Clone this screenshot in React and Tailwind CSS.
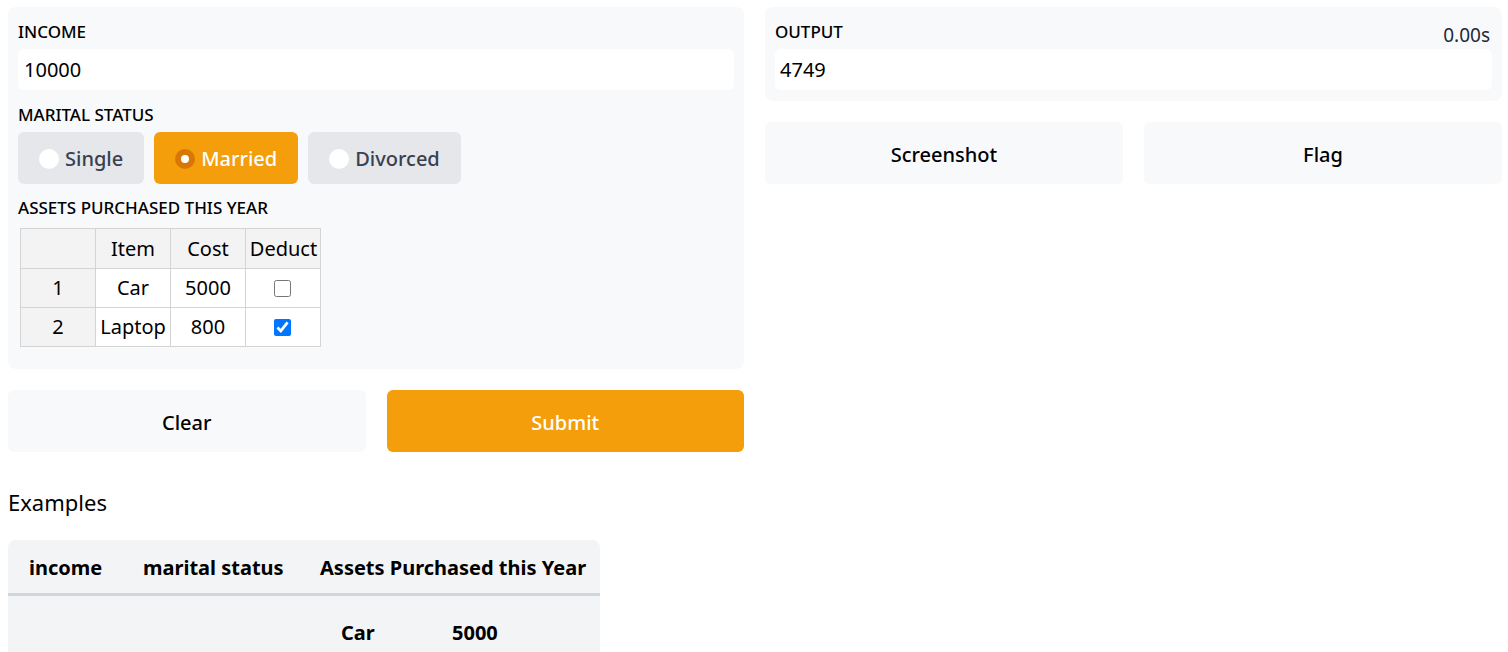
import { useState } from 'react';

const font = { fontFamily: '"Noto Sans", "Open Sans", sans-serif' };

function Radio({ label, checked, onClick }) {
  return (
    <button
      onClick={onClick}
      className={`flex h-[52px] items-center gap-[6px] rounded-md px-[21px] pt-[2px] text-[20px] font-medium ${
        checked ? 'bg-[#f49e0c] text-white' : 'bg-[#e5e7eb] text-[#374151]'
      }`}
    >
      {checked ? (
        <span className="flex h-[20px] w-[20px] items-center justify-center rounded-full bg-[#d97706]">
          <span className="h-[8px] w-[8px] rounded-full bg-white" />
        </span>
      ) : (
        <span className="h-[20px] w-[20px] rounded-full bg-white" />
      )}
      {label}
    </button>
  );
}

export default function App() {
  const [status, setStatus] = useState('Married');
  const rows = [
    { n: 1, item: 'Car', cost: 5000, deduct: false },
    { n: 2, item: 'Laptop', cost: 800, deduct: true },
  ];

  return (
    <div style={font} className="flex gap-[21px] bg-white pl-2 pr-[6px] pt-[7px] text-black">
      {/* Left column */}
      <div className="flex w-[736px] flex-col">
        <div className="flex flex-col rounded-lg bg-[#f8f9fb] px-[10px] pt-[13px] pb-[22px]">
          <span className="text-[17px] leading-6 font-medium uppercase">Income</span>
          <div className="mt-[5px] flex h-[41px] items-center rounded-md bg-white px-[6px] text-[20px]">10000</div>
          <span className="mt-[13px] text-[17px] leading-6 font-medium uppercase">Marital Status</span>
          <div className="mt-[5px] flex gap-[10px]">
            {['Single', 'Married', 'Divorced'].map((s) => (
              <Radio key={s} label={s} checked={status === s} onClick={() => setStatus(s)} />
            ))}
          </div>
          <span className="mt-[12px] text-[17px] leading-6 font-medium uppercase">Assets Purchased this Year</span>
          <div className="mt-[8px] ml-[2px] w-[301px] border border-[#d4d4d4] text-[20px]">
            <div className="grid grid-cols-[75px_75px_75px_75px] bg-[#f3f3f3]">
              <div className="h-[39px] border-r border-[#d4d4d4]" />
              <div className="flex h-[39px] items-center justify-center border-r border-[#d4d4d4]">Item</div>
              <div className="flex h-[39px] items-center justify-center border-r border-[#d4d4d4]">Cost</div>
              <div className="flex h-[39px] items-center justify-center">Deduct</div>
            </div>
            {rows.map((r) => (
              <div key={r.n} className="grid grid-cols-[75px_75px_75px_75px] border-t border-[#d4d4d4] bg-white">
                <div className="flex h-[38px] items-center justify-center border-r border-[#d4d4d4] bg-[#f3f3f3]">{r.n}</div>
                <div className="flex h-[38px] items-center justify-center border-r border-[#d4d4d4]">{r.item}</div>
                <div className="flex h-[38px] items-center justify-center border-r border-[#d4d4d4]">{r.cost}</div>
                <div className="flex h-[38px] items-center justify-center pr-[3px]">
                  <input type="checkbox" defaultChecked={r.deduct} className="h-[17px] w-[17px]" />
                </div>
              </div>
            ))}
          </div>
        </div>

        <div className="mt-[21px] flex gap-[21px]">
          <button className="h-[62px] flex-1 rounded-md bg-[#f8f9fb] pt-[4px] text-[20px] font-medium">Clear</button>
          <button className="h-[62px] flex-1 rounded-md bg-[#f49e0c] pt-[4px] text-[20px] font-medium text-white">Submit</button>
        </div>

        <h2 className="mt-[34px] text-[22px] leading-8">Examples</h2>

        <div className="mt-[22px] w-[592px] rounded-t-lg bg-[#f3f4f6] text-[20px] font-bold">
          <div className="grid h-[56px] grid-cols-[114px_177px_301px] items-center border-b-[3px] border-[#d1d5db] pt-[2px]">
            <span className="pl-[21px]">income</span>
            <span className="pl-[21px]">marital status</span>
            <span className="pl-[21px]">Assets Purchased this Year</span>
          </div>
          <div className="grid grid-cols-[114px_158px_320px] items-center">
            <span className="pl-[21px]">10000</span>
            <span className="pl-[21px]">married</span>
            <div className="flex flex-col pt-[13px] pb-[19px] pl-[61px]">
              <div className="grid h-[48px] grid-cols-[111px_111px] items-center">
                <span>Car</span>
                <span>5000</span>
              </div>
              <div className="grid h-[48px] grid-cols-[111px_111px] items-center">
                <span>Laptop</span>
                <span>800</span>
              </div>
            </div>
          </div>
        </div>
      </div>

      {/* Right column */}
      <div className="flex flex-1 flex-col">
        <div className="flex flex-col rounded-lg bg-[#f8f9fb] pl-[10px] pr-[12px] pt-[13px] pb-[11px]">
          <div className="flex h-6 items-start justify-between">
            <span className="text-[17px] leading-6 font-medium uppercase">Output</span>
            <span className="mt-[3px] text-[19px] leading-6 text-[#1f2937]">0.00s</span>
          </div>
          <div className="mt-[5px] mr-[-2px] flex h-[41px] items-center rounded-md bg-white px-[5px] text-[20px]">4749</div>
        </div>
        <div className="mt-[21px] flex gap-[21px]">
          <button className="h-[62px] flex-1 rounded-md bg-[#f8f9fb] pt-[4px] text-[20px] font-medium">Screenshot</button>
          <button className="h-[62px] flex-1 rounded-md bg-[#f8f9fb] pt-[4px] text-[20px] font-medium">Flag</button>
        </div>
      </div>
    </div>
  );
}
